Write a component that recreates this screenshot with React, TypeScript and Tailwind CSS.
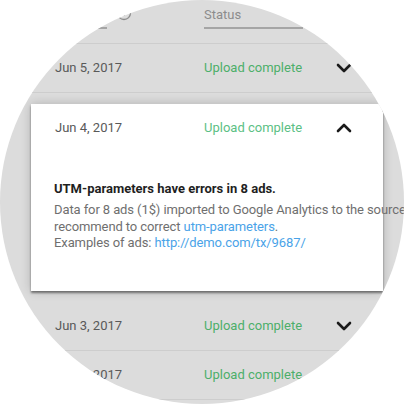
import { ChevronDown, ChevronUp } from 'lucide-react';

type Row = {
    date: string,
    status: string
}

const font = { fontFamily: 'Roboto, "Liberation Sans", sans-serif' }

const UploadRow = (props: Row) => {
    return (
        <div className="flex items-center h-[49px] border-b border-[#cdcdcd] pl-[24px] text-[13px]">
            <div className="w-[149px] text-[#595959]">{props.date}</div>
            <div className="w-[128px] text-[#4caf6a]">{props.status}</div>
            <ChevronDown size={24} strokeWidth={2.6} className="text-[#1a1a1a]" />
        </div>
    )
}

const App = () => {
    return (
        <div className="w-[405px] h-[404px] bg-white overflow-hidden" style={font}>
            <div className="w-[404px] h-[404px] rounded-full overflow-hidden bg-[#dcdcdc]">
                <div className="pl-[31px] w-[420px]">
                    {/* column headers */}
                    <div className="flex h-[44px] border-b border-[#cdcdcd] text-[13px] text-[#8c8c8c]">
                        <div className="w-[76px] pt-[5px] border-b-2 border-[#a5a5a5] mb-[14px]">Date</div>
                        <div className="ml-[9px] pt-[5px]">
                            <svg width="16" height="16" viewBox="0 0 16 16">
                                <circle cx="8" cy="8" r="6.5" fill="none" stroke="#8c8c8c" strokeWidth="1.3" />
                                <line x1="8" y1="7" x2="8" y2="11" stroke="#8c8c8c" strokeWidth="1.4" />
                                <circle cx="8" cy="5" r="0.8" fill="#8c8c8c" />
                            </svg>
                        </div>
                        <div className="w-[99px] ml-[72px] pt-[5px] border-b-2 border-[#a5a5a5] mb-[14px]">Status</div>
                    </div>
                    <UploadRow date="Jun 5, 2017" status="Upload complete" />
                    {/* expanded panel */}
                    <div className="mt-[11px] mb-[11px] w-[352px] bg-white h-[187px] shadow-[0_2px_2px_rgba(0,0,0,0.45),0_0_10px_rgba(0,0,0,0.2)]">
                        <div className="flex items-center h-[48px] pl-[24px] text-[13px]">
                            <div className="w-[149px] text-[#595959]">Jun 4, 2017</div>
                            <div className="w-[128px] text-[#5cbf85]">Upload complete</div>
                            <ChevronUp size={24} strokeWidth={2.6} className="text-[#1a1a1a]" />
                        </div>
                        <div className="pl-[23px] pt-[28px] w-[420px]">
                            <div className="text-[13px] font-bold text-[#1f1f1f] leading-[18px]">UTM-parameters have errors in 8 ads.</div>
                            <div className="text-[13px] tracking-[-0.1px] text-[#6f6f6f] leading-[16.5px] mt-[4px] whitespace-nowrap">
                                <div>Data for 8 ads (1$) imported to Google Analytics to the source</div>
                                <div>recommend to correct <span className="text-[#4aa3e8]">utm-parameters</span>.</div>
                                <div>Examples of ads: <span className="text-[#4aa3e8]">http://demo.com/tx/9687/</span></div>
                            </div>
                        </div>
                    </div>
                    <UploadRow date="Jun 3, 2017" status="Upload complete" />
                    <UploadRow date="Jun 2, 2017" status="Upload complete" />
                </div>
            </div>
        </div>
    )
}

export default App
